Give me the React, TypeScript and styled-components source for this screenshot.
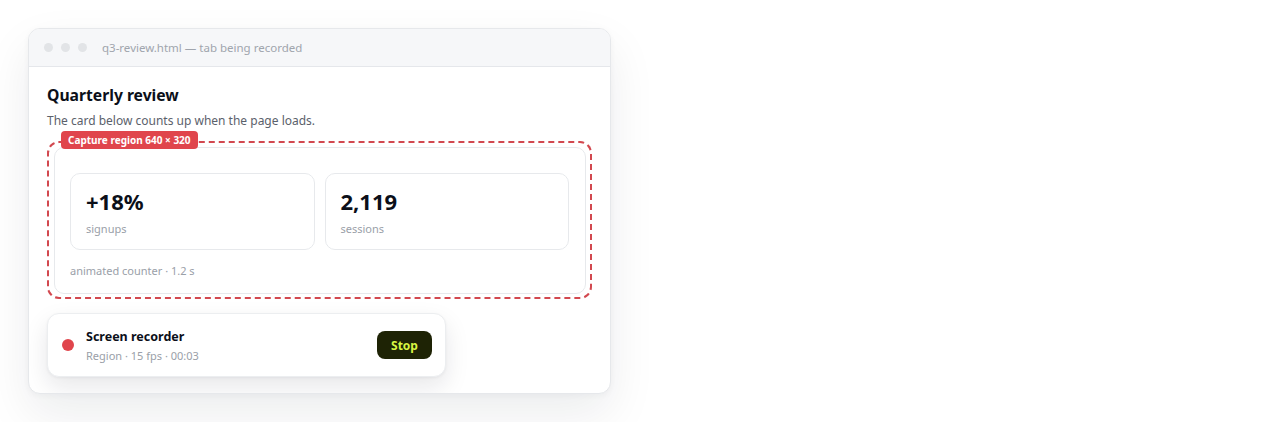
import React from "react";
import styled, { createGlobalStyle } from "styled-components";

const GlobalStyle = createGlobalStyle`
  html, body {
    margin: 0;
    padding: 0;
    background: #ffffff;
    font-family: "Noto Sans", "Open Sans", sans-serif;
    -webkit-font-smoothing: antialiased;
  }
`;

const Page = styled.div`
  padding: 28px 0 0 28px;
  height: 422px;
  box-sizing: border-box;
`;

const Window = styled.div`
  width: 583px;
  height: 366px;
  box-sizing: border-box;
  border: 1px solid #e6e8eb;
  border-radius: 12px;
  background: #fff;
  overflow: hidden;
  box-shadow: 0 20px 48px rgba(15, 23, 42, 0.08), 0 2px 6px rgba(15, 23, 42, 0.04);
  display: flex;
  flex-direction: column;
`;

const TitleBar = styled.div`
  height: 37px;
  flex: none;
  background: #f6f7f9;
  border-bottom: 1px solid #e5e7eb;
  display: flex;
  align-items: center;
  padding-left: 15px;
  gap: 8px;
`;

const Dot = styled.span`
  width: 9px;
  height: 9px;
  border-radius: 50%;
  background: #e2e4e7;
`;

const TabTitle = styled.span`
  margin-left: 7px;
  font-size: 11.5px;
  color: #a0a5ad;
`;

const Body = styled.div`
  padding: 18px 18px 0 18px;
  display: flex;
  flex-direction: column;
`;

const Heading = styled.h1`
  margin: 0;
  font-size: 15.7px;
  line-height: 20px;
  font-weight: 700;
  color: #0b0f19;
`;

const Sub = styled.p`
  margin: 7px 0 0;
  font-size: 12px;
  line-height: 17px;
  color: #5b616b;
`;

const Region = styled.div`
  position: relative;
  margin-top: 12px;
  height: 158px;
  box-sizing: border-box;
  border: 2px dashed #d2484f;
  border-radius: 12px;
  padding: 4px 4px 3px 5px;
  display: flex;
`;

const RegionLabel = styled.span`
  position: absolute;
  left: 12px;
  top: -12px;
  background: #e0454c;
  color: #fff;
  font-size: 10px;
  font-weight: 700;
  line-height: 18px;
  padding: 0 7px;
  border-radius: 4px;
`;

const Card = styled.div`
  flex: 1;
  border: 1px solid #e7e9ec;
  border-radius: 10px;
  padding: 25px 16px 0 15px;
  display: flex;
  flex-direction: column;
`;

const Stats = styled.div`
  display: grid;
  grid-template-columns: 1fr 1fr;
  gap: 10px;
`;

const Stat = styled.div`
  height: 77px;
  box-sizing: border-box;
  border: 1px solid #e7e9ec;
  border-radius: 10px;
  padding: 13px 15px 0;
`;

const Value = styled.div`
  font-size: 22px;
  line-height: 28px;
  font-weight: 700;
  color: #0b0f19;
`;

const Caption = styled.div`
  margin-top: 6px;
  font-size: 11px;
  line-height: 15px;
  color: #9aa0a8;
`;

const Footer = styled.div`
  margin-top: 13px;
  font-size: 11px;
  line-height: 15px;
  color: #9aa0a8;
`;

const Recorder = styled.div`
  margin-top: 14px;
  width: 399px;
  height: 64px;
  box-sizing: border-box;
  border: 1px solid #eceef0;
  border-radius: 12px;
  background: #fff;
  box-shadow: 0 10px 24px rgba(15, 23, 42, 0.1), 0 1px 3px rgba(15, 23, 42, 0.05);
  display: flex;
  align-items: center;
  padding: 0 13px 0 14px;
`;

const RecDot = styled.span`
  width: 12px;
  height: 12px;
  border-radius: 50%;
  background: #e0454c;
  flex: none;
`;

const RecText = styled.div`
  margin-left: 12px;
  flex: 1;
  display: flex;
  flex-direction: column;
  gap: 3px;
`;

const RecTitle = styled.div`
  font-size: 12.5px;
  line-height: 17px;
  font-weight: 700;
  color: #0b0f19;
`;

const RecMeta = styled.div`
  font-size: 11px;
  line-height: 15px;
  color: #9aa0a8;
`;

const StopButton = styled.button`
  width: 55px;
  height: 28px;
  border: none;
  border-radius: 8px;
  background: #1e2305;
  color: #d7f542;
  font-family: inherit;
  font-size: 12px;
  font-weight: 700;
  cursor: pointer;
`;

const stats = [
  { value: "+18%", label: "signups" },
  { value: "2,119", label: "sessions" },
];

const App = () => {
  return (
    <>
      <GlobalStyle />
      <Page>
        <Window>
          <TitleBar>
            <Dot />
            <Dot />
            <Dot />
            <TabTitle>q3-review.html — tab being recorded</TabTitle>
          </TitleBar>
          <Body>
            <Heading>Quarterly review</Heading>
            <Sub>The card below counts up when the page loads.</Sub>
            <Region>
              <RegionLabel>Capture region 640 × 320</RegionLabel>
              <Card>
                <Stats>
                  {stats.map((s) => (
                    <Stat key={s.label}>
                      <Value>{s.value}</Value>
                      <Caption>{s.label}</Caption>
                    </Stat>
                  ))}
                </Stats>
                <Footer>animated counter · 1.2 s</Footer>
              </Card>
            </Region>
            <Recorder>
              <RecDot />
              <RecText>
                <RecTitle>Screen recorder</RecTitle>
                <RecMeta>Region · 15 fps · 00:03</RecMeta>
              </RecText>
              <StopButton>Stop</StopButton>
            </Recorder>
          </Body>
        </Window>
      </Page>
    </>
  );
};

export default App;
